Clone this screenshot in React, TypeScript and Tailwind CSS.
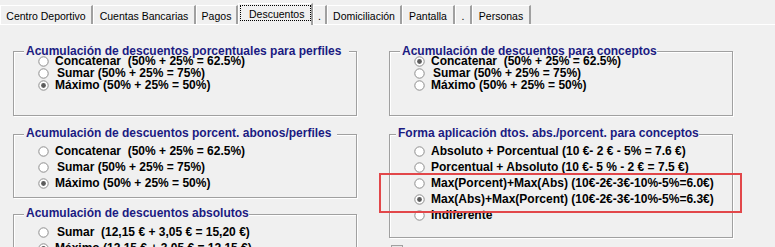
import React from 'react';

type Opt = { label: string; checked?: boolean; shift?: boolean };

const tabs = [
  { label: 'Centro Deportivo', w: 'w-[93px]' },
  { label: 'Cuentas Bancarias', w: 'w-[103px]' },
  { label: 'Pagos', w: 'w-[42px]' },
  { label: 'Descuentos', w: 'w-[75px]', active: true },
  { label: '.', w: 'w-[14px]' },
  { label: 'Domiciliación', w: 'w-[75px]' },
  { label: 'Pantalla', w: 'w-[53px]' },
  { label: '.', w: 'w-[17px]' },
  { label: 'Personas', w: 'w-[59px]' },
];

function Radio({ checked }: { checked?: boolean }) {
  return (
    <svg width="11" height="11" viewBox="0 0 11 11" className="shrink-0">
      <circle cx="5.5" cy="5.5" r="4.7" fill="#fff" stroke="#8c8c8c" strokeWidth="1" />
      {checked && <circle cx="5.5" cy="5.5" r="2.4" fill="#5c5c5c" />}
    </svg>
  );
}

function Options({ items, rowH }: { items: Opt[]; rowH: string }) {
  return (
    <div className="relative flex flex-col pl-[24px]">
      {items.map((o, i) => (
        <div key={i} className={`flex items-center gap-[6px] ${rowH}`}>
          <Radio checked={o.checked} />
          <span
            className={`whitespace-pre text-[12px] leading-[12px] font-bold text-black ${o.shift ? 'ml-[2px]' : ''}`}
          >
            {o.label}
          </span>
        </div>
      ))}
    </div>
  );
}

function GroupBox({
  title,
  titleClass,
  className,
  children,
}: {
  title: string;
  titleClass: string;
  className: string;
  children: React.ReactNode;
}) {
  return (
    <div
      className={`relative w-[344px] border border-[#a0a0a0] shadow-[1px_1px_0_#fff,inset_1px_1px_0_#fff] ${className}`}
    >
      <span
        className={`absolute bg-[#f0f0f0] pl-[2px] text-[12px] leading-[11px] font-bold text-[#1b1b82] whitespace-nowrap ${titleClass}`}
      >
        {title}
      </span>
      {children}
    </div>
  );
}

const pctA: Opt[] = [
  { label: 'Concatenar  (50% + 25% = 62.5%)' },
  { label: 'Sumar (50% + 25% = 75%)', shift: true },
  { label: 'Máximo (50% + 25% = 50%)', checked: true },
];

const pctB: Opt[] = [
  { label: 'Concatenar  (50% + 25% = 62.5%)', checked: true },
  { label: 'Sumar (50% + 25% = 75%)', shift: true },
  { label: 'Máximo (50% + 25% = 50%)' },
];

export default function App() {
  return (
    <div className="relative w-[775px] h-[247px] overflow-hidden bg-[#f0f0f0] font-['Liberation_Sans',Arial,sans-serif]">
      {/* Tabs */}
      <div className="flex items-end h-[24px]">
        {tabs.map((t, i) =>
          t.active ? (
            <div
              key={i}
              className={`relative z-10 -mb-px h-[22px] ${t.w} border-t border-l border-r-2 border-t-white border-l-white border-r-[#a0a0a0] bg-[#f0f0f0] pt-[4px] pl-[10px] text-[10.5px] leading-[12px] text-black whitespace-nowrap`}
            >
              <span className="absolute left-px top-px w-[71px] h-[16px] border border-dotted border-black" />
              {t.label}
            </div>
          ) : (
            <div
              key={i}
              className={`h-[19px] ${t.w} border-t border-l border-r-2 border-t-white border-l-white border-r-[#a0a0a0] pt-[4px] text-center text-[10.5px] leading-[12px] text-black whitespace-nowrap`}
            >
              {t.label}
            </div>
          )
        )}
      </div>

      {/* Panel */}
      <div className="flex gap-[32px] border-t border-white pl-[13px] pt-[26px]">
        <div className="flex flex-col">
          <GroupBox
            title="Acumulación de descuentos porcentuales para perfiles"
            titleClass="left-[10px] -top-[6px] pr-[8px]"
            className="h-[65px] pt-[3px]"
          >
            <Options items={pctA} rowH="h-[12px]" />
          </GroupBox>
          <GroupBox
            title="Acumulación de descuentos porcent. abonos/perfiles"
            titleClass="left-[10px] -top-[7px] pr-[6px]"
            className="mt-[18px] h-[64px] pt-[8px]"
          >
            <Options items={pctA} rowH="h-[16px]" />
          </GroupBox>
          <GroupBox
            title="Acumulación de descuentos absolutos"
            titleClass="left-[10px] -top-[7px]"
            className="mt-[16px] h-[60px] pt-[9px]"
          >
            <Options
              items={[
                { label: 'Sumar  (12,15 € + 3,05 € = 15,20 €)', shift: true },
                { label: 'Máximo (12,15 € + 3,05 € = 12,15 €)', checked: true },
              ]}
              rowH="h-[16px]"
            />
          </GroupBox>
        </div>

        <div className="flex flex-col">
          <GroupBox
            title="Acumulación de descuentos para conceptos"
            titleClass="left-[10px] -top-[6px]"
            className="h-[65px] pt-[3px]"
          >
            <Options items={pctB} rowH="h-[12px]" />
          </GroupBox>
          <GroupBox
            title="Forma aplicación dtos. abs./porcent. para conceptos"
            titleClass="left-[6px] -top-[7px]"
            className="mt-[18px] h-[104px] pt-[8px]"
          >
            <Options
              items={[
                { label: 'Absoluto + Porcentual (10 €- 2 € - 5% = 7.6 €)' },
                { label: 'Porcentual + Absoluto (10 €- 5 % - 2 € = 7.5 €)' },
                { label: 'Max(Porcent)+Max(Abs) (10€-2€-3€-10%-5%=6.0€)' },
                { label: 'Max(Abs)+Max(Porcent) (10€-2€-3€-10%-5%=6.3€)', checked: true },
                { label: 'Indiferente' },
              ]}
              rowH="h-[16px]"
            />
          </GroupBox>
          <div className="mt-[7px] ml-[2px] w-[12px] h-[12px] border border-[#a0a0a0] bg-[#e6e6e6]" />
        </div>
      </div>

      {/* Highlight annotation */}
      <div className="absolute left-[379px] top-[173px] w-[363px] h-[40px] border-2 border-[#e2474a]" />
    </div>
  );
}
